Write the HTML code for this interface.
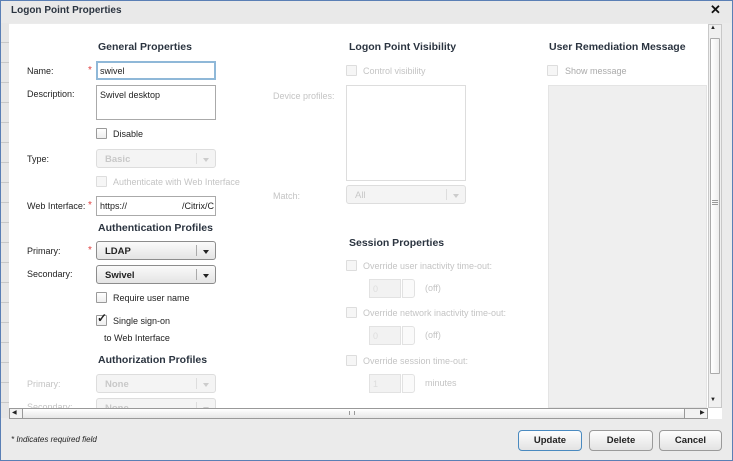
<!DOCTYPE html>
<html><head><meta charset="utf-8"><style>
*{box-sizing:border-box;margin:0;padding:0}
body{width:733px;height:461px;position:relative;overflow:hidden;background:#ebebeb;font-family:"Liberation Sans",Arial,sans-serif;font-size:9px;color:#222}
.a{position:absolute}
.h{font-weight:bold;font-size:10.5px;color:#2b3440}
.lbl{font-size:9px;color:#222}
.dis{color:#c4c4c4}
.cb{position:absolute;width:11px;height:11px;border:1px solid #9a9a9a;background:linear-gradient(#fff,#eee);border-radius:1px}
.cb.d{border-color:#ddd;background:#f6f6f6}
.sel{position:absolute;height:19px;width:120px;border:1px solid #8c8c8c;border-radius:3px;background:linear-gradient(#fafafa,#e4e4e4);font-weight:bold;font-size:9.5px;padding:4px 0 0 8px}
.sel:after{content:"";position:absolute;right:18px;top:3px;height:11px;border-left:1px solid #aaa}
.sel i{position:absolute;right:6px;top:8px;border:3.5px solid transparent;border-top:4px solid #222;border-bottom:0}
.sel.d{border-color:#ddd;color:#c8c8c8;background:#f4f4f4}
.sel.d i{border-top-color:#ccc}
.sel.d:after{border-color:#ddd}
.inp{position:absolute;border:1px solid #aaa;background:#fff;font-size:9px;padding:4px 3px}
.star{position:absolute;color:#e04040;font-size:10px}
.spin{position:absolute;width:46px;height:19px;}
.spin b{position:absolute;left:0;top:0;width:32px;height:19px;border:1px solid #e2e2e2;background:#f2f2f2;color:#ddd;font-weight:normal;padding:4px 3px}
.spin s{position:absolute;left:33px;top:0;width:13px;height:19px;border:1px solid #e2e2e2;border-radius:0 3px 3px 0;background:#fafafa}
.btn{position:absolute;top:430px;height:21px;border:1px solid #9a9a9a;border-radius:4px;background:linear-gradient(#fdfdfd,#e3e3e3);font-weight:bold;font-size:9.5px;text-align:center;padding-top:4px;color:#222}
</style></head><body>
<div class="a" style="left:0;top:0;width:733px;height:461px;border:1px solid #5a7fb5"></div>
<div class="a" style="left:1px;top:1px;width:731px;height:22px;background:#e9e9e9"></div>
<div class="a" style="left:11px;top:5px;font-weight:bold;font-size:10px;color:#2b3440">Logon Point Properties</div>
<div class="a" style="left:710px;top:2px;font-weight:bold;font-size:13px;color:#111">✕</div>
<div class="a" style="left:1px;top:23px;width:8px;height:395px;background:repeating-linear-gradient(#e6e6e6 0 19px,#c8c8c8 19px 20px)"></div>
<div class="a" style="left:9px;top:24px;width:699px;height:384px;background:#fff"></div>

<div class="a h" style="left:98px;top:41px">General Properties</div>
<div class="a lbl" style="left:27px;top:66px">Name:</div>
<div class="star" style="left:88px;top:65px">*</div>
<div class="inp" style="left:96px;top:61px;width:120px;height:19px;border:2px solid #8fb8d8;padding:3px 2px">swivel</div>
<div class="a lbl" style="left:27px;top:89px">Description:</div>
<div class="inp" style="left:96px;top:85px;width:120px;height:35px">Swivel desktop</div>
<div class="cb" style="left:96px;top:128px"></div>
<div class="a lbl" style="left:113px;top:129px">Disable</div>
<div class="a lbl" style="left:27px;top:154px">Type:</div>
<div class="sel d" style="left:96px;top:149px;width:120px">Basic<i></i></div>
<div class="cb d" style="left:96px;top:176px"></div>
<div class="a lbl dis" style="left:113px;top:177px">Authenticate with Web Interface</div>
<div class="a lbl" style="left:27px;top:201px">Web Interface:</div>
<div class="star" style="left:88px;top:200px">*</div>
<div class="inp" style="left:96px;top:196px;width:120px;height:20px;overflow:hidden;white-space:nowrap">https://<span style="margin-left:55px">/Citrix/C</span></div>

<div class="a h" style="left:98px;top:222px">Authentication Profiles</div>
<div class="a lbl" style="left:27px;top:246px">Primary:</div>
<div class="star" style="left:88px;top:245px">*</div>
<div class="sel" style="left:96px;top:241px">LDAP<i></i></div>
<div class="a lbl" style="left:27px;top:269px">Secondary:</div>
<div class="sel" style="left:96px;top:265px">Swivel<i></i></div>
<div class="cb" style="left:96px;top:292px"></div>
<div class="a lbl" style="left:113px;top:293px">Require user name</div>
<div class="cb" style="left:96px;top:315px"></div>
<div class="a" style="left:97px;top:311px;font-size:12px;font-weight:bold">✓</div>
<div class="a lbl" style="left:113px;top:316px">Single sign-on</div>
<div class="a lbl" style="left:104px;top:333px">to Web Interface</div>

<div class="a h" style="left:98px;top:354px">Authorization Profiles</div>
<div class="a lbl dis" style="left:27px;top:379px">Primary:</div>
<div class="sel d" style="left:96px;top:374px">None<i></i></div>
<div class="a lbl dis" style="left:27px;top:402px;height:6px;overflow:hidden">Secondary:</div>
<div class="a" style="left:96px;top:398px;width:120px;height:10px;overflow:hidden"><div class="sel d" style="left:0;top:0">None<i></i></div></div>

<div class="a h" style="left:349px;top:41px">Logon Point Visibility</div>
<div class="cb d" style="left:346px;top:65px"></div>
<div class="a lbl dis" style="left:363px;top:66px">Control visibility</div>
<div class="a lbl dis" style="left:273px;top:91px">Device profiles:</div>
<div class="a" style="left:346px;top:85px;width:120px;height:96px;border:1px solid #ddd"></div>
<div class="a lbl dis" style="left:273px;top:191px">Match:</div>
<div class="sel d" style="left:346px;top:185px;width:120px;font-weight:normal">All<i></i></div>

<div class="a h" style="left:349px;top:237px">Session Properties</div>
<div class="cb d" style="left:346px;top:260px"></div>
<div class="a lbl dis" style="left:363px;top:261px">Override user inactivity time-out:</div>
<div class="spin" style="left:369px;top:279px"><b>0</b><s></s></div>
<div class="a lbl dis" style="left:425px;top:283px">(off)</div>
<div class="cb d" style="left:346px;top:307px"></div>
<div class="a lbl dis" style="left:363px;top:308px">Override network inactivity time-out:</div>
<div class="spin" style="left:369px;top:326px"><b>0</b><s></s></div>
<div class="a lbl dis" style="left:425px;top:330px">(off)</div>
<div class="cb d" style="left:346px;top:355px"></div>
<div class="a lbl dis" style="left:363px;top:356px">Override session time-out:</div>
<div class="spin" style="left:369px;top:374px"><b>1</b><s></s></div>
<div class="a lbl dis" style="left:425px;top:378px">minutes</div>

<div class="a h" style="left:549px;top:41px">User Remediation Message</div>
<div class="cb d" style="left:547px;top:65px"></div>
<div class="a lbl" style="left:565px;top:66px;color:#aaa">Show message</div>
<div class="a" style="left:548px;top:85px;width:159px;height:323px;background:#efefef;border:1px solid #e4e4e4"></div>

<div class="a" style="left:708px;top:24px;width:14px;height:384px;background:#f0f0f0;border:1px solid #c8c8c8"></div>
<div class="a" style="left:710px;top:25px;font-size:6px">▲</div>
<div class="a" style="left:710px;top:38px;width:10px;height:336px;border:1px solid #aaa;border-radius:1px;background:linear-gradient(90deg,#fff,#eee)"></div>
<div class="a" style="left:712px;top:200px;width:6px;height:5px;border-top:1px solid #999;border-bottom:1px solid #999"></div>
<div class="a" style="left:712px;top:202px;width:6px;height:1px;background:#999"></div>
<div class="a" style="left:710px;top:397px;font-size:6px">▼</div>
<div class="a" style="left:9px;top:408px;width:699px;height:11px;background:#f2f2f2;border:1px solid #999"></div>
<div class="a" style="left:22px;top:408px;width:663px;height:11px;border:1px solid #999;border-radius:1px;background:linear-gradient(#fff,#e6e6e6)"></div>
<div class="a" style="left:12px;top:409px;font-size:6px">◀</div>
<div class="a" style="left:700px;top:409px;font-size:6px">▶</div>
<div class="a" style="left:349px;top:411px;width:6px;height:4px;border-left:1px solid #999;border-right:1px solid #999"></div>
<div class="a" style="left:708px;top:408px;width:14px;height:11px;background:#fff"></div>

<div class="a" style="left:11px;top:435px;font-size:8px;font-style:italic;color:#222">* Indicates required field</div>
<div class="btn" style="left:518px;width:64px;border:1.5px solid #4a8ac0">Update</div>
<div class="btn" style="left:589px;width:64px">Delete</div>
<div class="btn" style="left:659px;width:63px">Cancel</div>
</body></html>
